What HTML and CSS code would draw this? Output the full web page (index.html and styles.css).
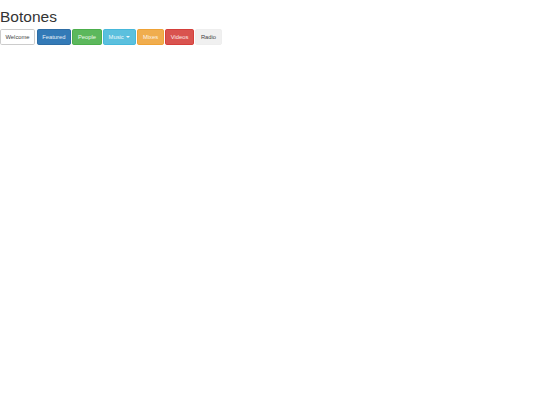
FILE: index.html
```
<!DOCTYPE html>
<html>
<head>
<meta charset="utf-8">
<link rel="stylesheet" href="styles.css">
</head>
<body>
<h1 class="title">Botones</h1>
<div class="toolbar">
  <button class="btn btn-default">Welcome</button>
  <button class="btn btn-primary">Featured</button>
  <button class="btn btn-success">People</button>
  <button class="btn btn-info">Music <span class="caret"></span></button>
  <button class="btn btn-warning">Mixes</button>
  <button class="btn btn-danger">Videos</button>
  <button class="btn btn-light">Radio</button>
</div>
</body>
</html>
```
FILE: styles.css
```
html, body {
  margin: 0;
  padding: 0;
  background: #fff;
  font-family: "Liberation Sans", Arial, sans-serif;
  color: #333;
}
.title {
  font-size: 15.5px;
  font-weight: 400;
  line-height: 1.1;
  margin: 8px 0 4px 0;
  color: #333;
}
.toolbar {
  display: flex;
  gap: 1.6px;
  align-items: flex-start;
}
.btn {
  font-family: "Liberation Sans", Arial, sans-serif;
  font-size: 5.8px;
  font-weight: 400;
  line-height: 1.42857;
  padding: 2.6px 4.5px;
  border: 1px solid transparent;
  border-radius: 1.8px;
  margin: 0;
  white-space: nowrap;
}
.btn-default { background: #fff; border-color: #ccc; color: #444; }
.btn-primary { background: #337ab7; border-color: #2e6da4; color: #e8f0f7; }
.btn-success { background: #5cb85c; border-color: #4cae4c; color: #eef8ee; }
.btn-info { background: #5bc0de; border-color: #46b8da; color: #eef9fc; }
.btn-warning { background: #f0ad4e; border-color: #eea236; color: #fdf4e8; }
.btn-danger { background: #d9534f; border-color: #d43f3a; color: #fbeaea; }
.btn-light { background: #f0f0f0; border-color: #eeeeee; color: #444; }
.caret {
  display: inline-block;
  width: 0;
  height: 0;
  vertical-align: middle;
  border-top: 2px solid #eef9fc;
  border-left: 2px solid transparent;
  border-right: 2px solid transparent;
  margin-left: 1px;
}
```
